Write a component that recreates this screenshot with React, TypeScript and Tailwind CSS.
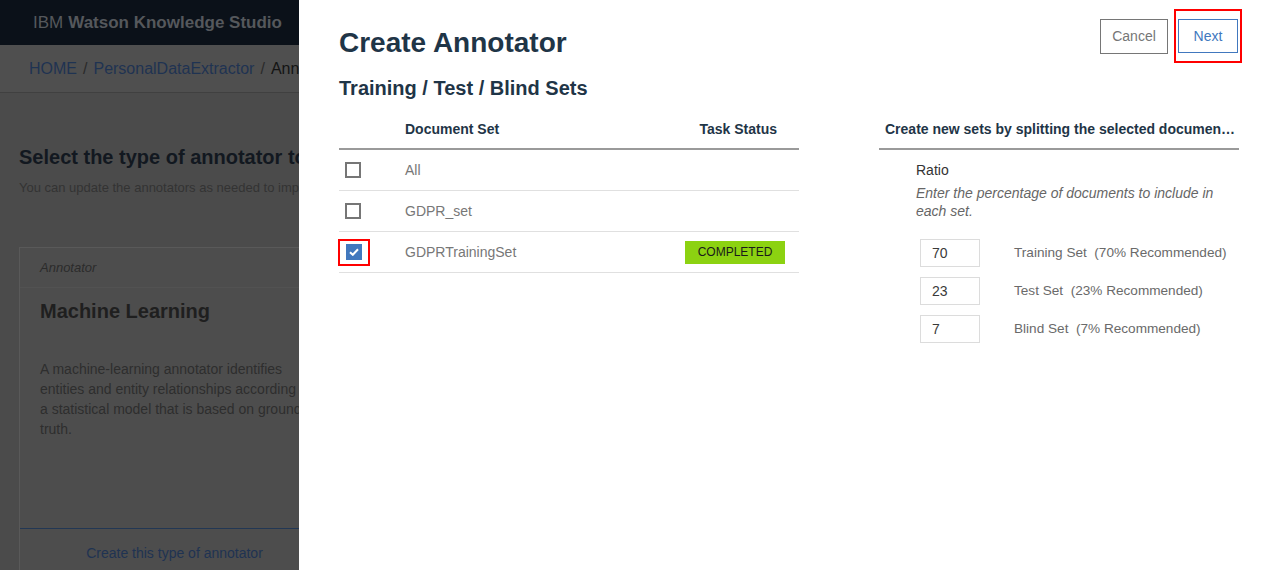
import React from "react";

const font = { fontFamily: '"Liberation Sans", Arial, sans-serif' };

function Checkbox({ checked }: { checked?: boolean }) {
  if (checked) {
    return (
      <div className="w-4 h-4 bg-[#4178be] flex items-center justify-center">
        <svg width="10" height="8" viewBox="0 0 10 8">
          <path d="M1 4.2 L3.8 6.8 L9 1.2" fill="none" stroke="#fff" strokeWidth="2" />
        </svg>
      </div>
    );
  }
  return <div className="w-4 h-4 border-2 border-[#767676] bg-white" />;
}

function RatioRow({ value, label }: { value: string; label: string }) {
  return (
    <div className="flex items-center h-[28px]">
      <div className="w-[60px] h-[28px] border border-[#dcdcdc] flex items-center pl-[11px] text-[14px] text-[#3a3a3a]">
        {value}
      </div>
      <div className="ml-[34px] text-[13.6px] text-[#6a6a6a] whitespace-pre">{label}</div>
    </div>
  );
}

export default function App() {
  return (
    <div className="w-[1262px] h-[570px] flex overflow-hidden bg-white" style={font}>
      {/* Dimmed underlying page */}
      <div className="w-[299px] shrink-0 h-full flex flex-col overflow-hidden bg-[#4b4b4b]">
        <div className="h-[45px] shrink-0 bg-[#0b1119] flex items-center pl-[33px] whitespace-nowrap text-[17px] text-[#55585c]">
          <span className="font-normal">IBM</span>
          <span className="font-bold ml-[5px]">Watson Knowledge Studio</span>
        </div>
        <div className="h-[48px] shrink-0 bg-[#4f4f4f] border-b border-[#404040] flex items-center pl-[29px] whitespace-nowrap text-[16px]">
          <span className="text-[#1f3352]">HOME</span>
          <span className="text-[#2a2a2a] mx-[6px]">/</span>
          <span className="text-[#1f3352]">PersonalDataExtractor</span>
          <span className="text-[#2a2a2a] mx-[6px]">/</span>
          <span className="text-[#141414]">Annotators</span>
        </div>
        <div className="pl-[19px] pt-[51px] whitespace-nowrap">
          <div className="text-[20px] font-bold text-[#121820] leading-[26px]">
            Select the type of annotator to create
          </div>
          <div className="text-[13px] text-[#333] mt-[9px] leading-[18px]">
            You can update the annotators as needed to improve performance.
          </div>
        </div>
        <div className="ml-[19px] mt-[50px] w-[310px] flex-1 border-l border-t border-[#595959] bg-[#4d4d4d] flex flex-col">
          <div className="h-[40px] flex items-center pl-[20px] border-b border-[#525252] text-[13px] italic text-[#2b2b2b]">
            Annotator
          </div>
          <div className="pl-[20px] pt-[10px] text-[20px] font-bold text-[#1f1f1f] leading-[26px] whitespace-nowrap">
            Machine Learning
          </div>
          <div className="pl-[20px] pt-[35px] text-[14px] leading-[20px] text-[#2e2e2e] whitespace-nowrap">
            A machine-learning annotator identifies
            <br />
            entities and entity relationships according to
            <br />
            a statistical model that is based on ground
            <br />
            truth.
          </div>
          <div className="flex-1" />
          <div className="h-[42px] border-t border-[#223754] flex items-center justify-center pt-[8px] text-[14px] text-[#1f3352]">
            <span className="whitespace-nowrap">Create this type of annotator</span>
          </div>
        </div>
      </div>

      {/* Modal panel */}
      <div className="flex-1 min-w-0 h-full bg-white flex flex-col pl-[40px] pr-[20px] overflow-hidden">
        <div className="flex items-start justify-between">
          <div className="pt-[27px]">
            <div className="text-[28px] font-bold text-[#1f3547] leading-[32px]">Create Annotator</div>
            <div className="text-[20px] font-bold text-[#1f3547] leading-[24px] mt-[17px]">
              Training / Test / Blind Sets
            </div>
          </div>
          <div className="flex items-center pt-[9px]">
            <button className="w-[68px] h-[35px] border border-[#767676] text-[14px] text-[#767676] bg-white mr-[6px]">
              Cancel
            </button>
            <div className="border-2 border-[#ff0000] px-[2px] py-[8px]">
              <button className="w-[60px] h-[34px] border border-[#4178be] text-[14px] text-[#4178be] bg-white">
                Next
              </button>
            </div>
          </div>
        </div>

        <div className="flex mt-[10px] pr-[3px] min-w-0">
          {/* Left table */}
          <div className="w-[460px] shrink-0">
            <div className="h-[40px] flex items-center border-b-2 border-[#9a9a9a] text-[14px] font-bold text-[#1f3547]">
              <div className="w-[66px]" />
              <div className="flex-1">Document Set</div>
              <div className="pr-[22px]">Task Status</div>
            </div>
            {[
              { name: "All", checked: false, status: "" },
              { name: "GDPR_set", checked: false, status: "" },
              { name: "GDPRTrainingSet", checked: true, status: "COMPLETED" },
            ].map((r) => (
              <div key={r.name} className="h-[41px] flex items-center border-b border-[#e0e0e0] text-[14px] text-[#777]">
                <div className="w-[66px] flex items-center">
                  {r.checked ? (
                    <div className="ml-[-1px] w-[32px] h-[27px] border-2 border-[#ff0000] flex items-center justify-center">
                      <Checkbox checked />
                    </div>
                  ) : (
                    <div className="ml-[6px]">
                      <Checkbox />
                    </div>
                  )}
                </div>
                <div className="flex-1">{r.name}</div>
                {r.status && (
                  <div className="mr-[14px] w-[100px] h-[23px] bg-[#8cd211] text-[12px] text-[#1a1a1a] flex items-center justify-center">
                    {r.status}
                  </div>
                )}
              </div>
            ))}
          </div>

          {/* Right panel */}
          <div className="ml-[80px] flex-1 min-w-0">
            <div className="h-[40px] flex items-center border-b-2 border-[#9a9a9a] pl-[6px] pr-[2px] text-[14px] font-bold text-[#1f3547] min-w-0">
              <span className="truncate min-w-0">
                Create new sets by splitting the selected documents into training, test and blind sets
              </span>
            </div>
            <div className="pl-[37px] pt-[11px]">
              <div className="text-[14px] text-[#333] leading-[18px]">Ratio</div>
              <div className="text-[14px] italic text-[#666] leading-[18px] mt-[5px] w-[310px]">
                Enter the percentage of documents to include in each set.
              </div>
              <div className="pl-[4px] mt-[19px] flex flex-col gap-[10px]">
                <RatioRow value="70" label="Training Set  (70% Recommended)" />
                <RatioRow value="23" label="Test Set  (23% Recommended)" />
                <RatioRow value="7" label="Blind Set  (7% Recommended)" />
              </div>
            </div>
          </div>
        </div>
      </div>
    </div>
  );
}
